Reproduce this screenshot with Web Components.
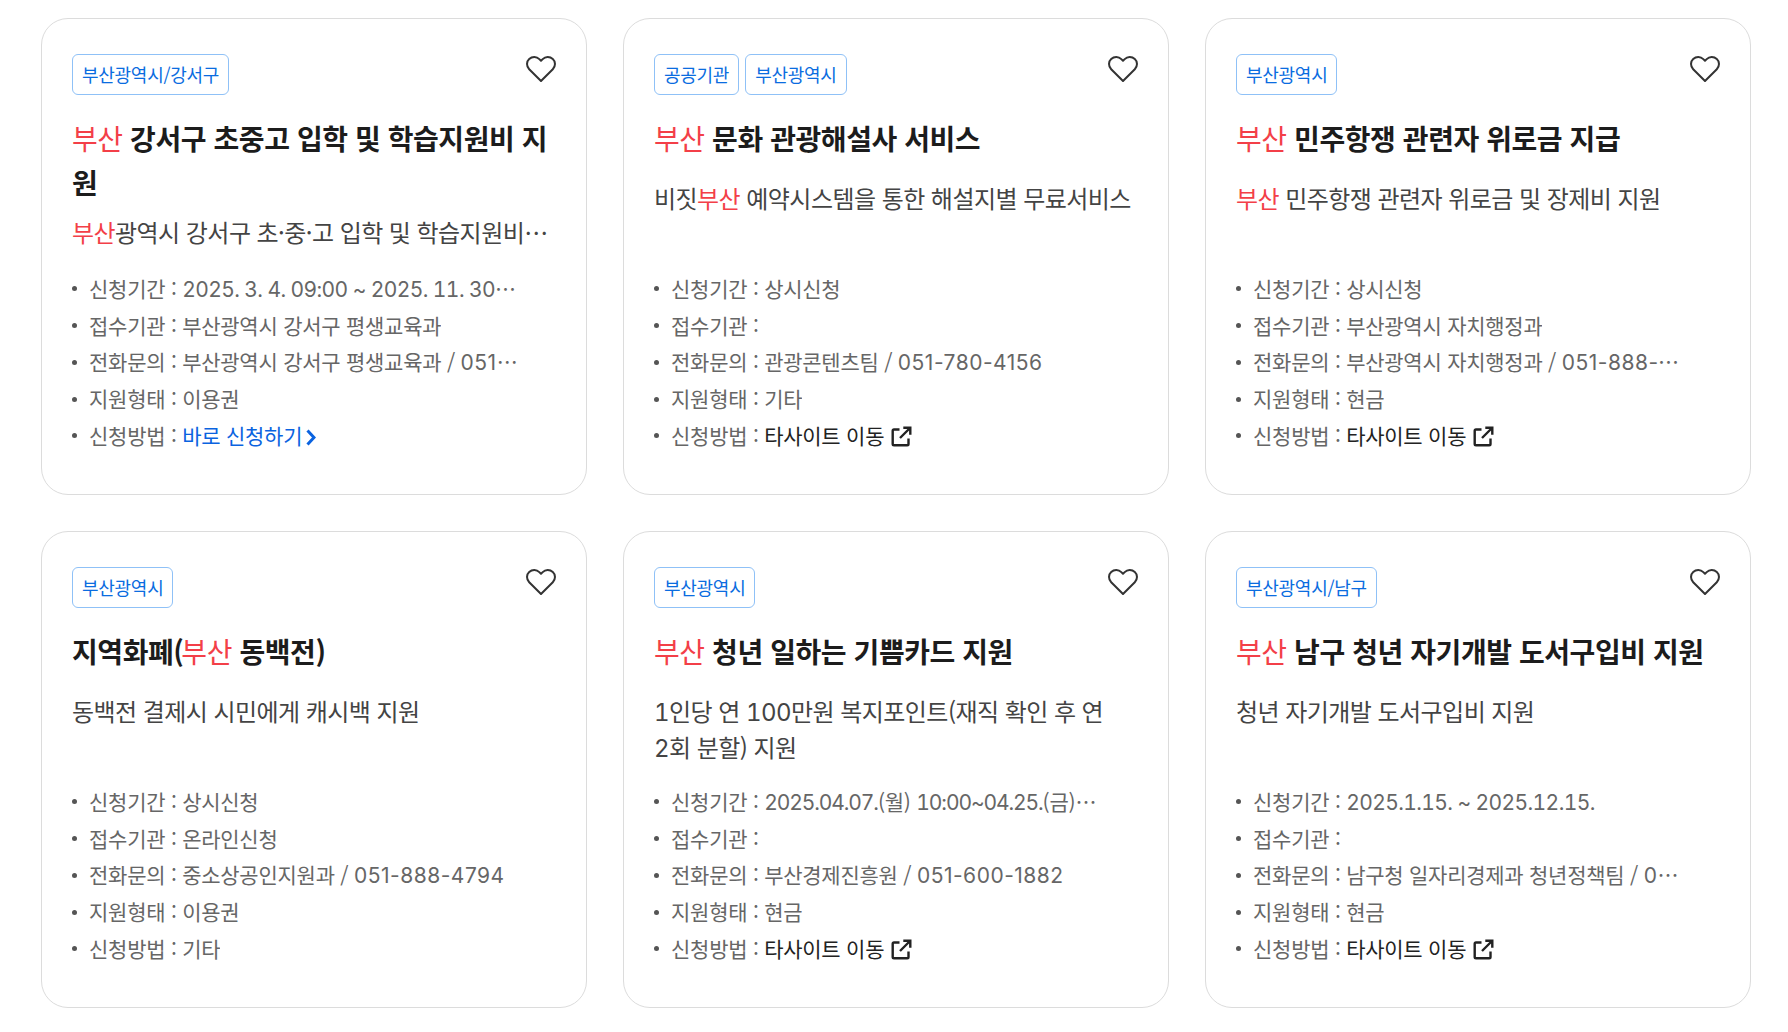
<!DOCTYPE html>
<html lang="ko"><head><meta charset="utf-8"><title>카드</title>
<style>
html,body{margin:0;padding:0;background:#fff;font-family:"Noto Sans CJK KR","Noto Sans",sans-serif}
</style></head><body>
<template id="t-grid"><style>
:host{display:grid;grid-template-columns:repeat(3,546px);column-gap:36px;row-gap:36px;padding:18px 0 0 41px}
</style><slot></slot></template>
<template id="t-card"><style>
:host{display:block;box-sizing:border-box;height:477px;border:1px solid #dcdcdc;border-radius:27px;padding:35px 30px 0 30px;background:#fff}
.top{display:flex;justify-content:space-between;align-items:flex-start;height:41px}
.tags{display:flex;gap:6px}
.title{margin-top:21px;font-size:28px;line-height:44px;font-weight:700;color:#1c1c1c;letter-spacing:-.43px}
.desc{margin-top:19.5px;height:72px;font-size:24px;line-height:36px;color:#444;letter-spacing:-.55px;overflow:hidden;word-break:keep-all}
:host([compact]) .desc{margin-top:10px;height:37.5px;white-space:nowrap;text-overflow:ellipsis}
.list{margin-top:18px;display:flex;flex-direction:column}
</style>
<div class="top"><div class="tags"><slot name="tags"></slot></div><heart-button></heart-button></div>
<div class="title"><slot name="title"></slot></div>
<div class="desc"><slot name="desc"></slot></div>
<div class="list"><slot></slot></div></template>
<template id="t-tag"><style>
:host{display:block;box-sizing:border-box;height:41px;padding:0 9px;border:1px solid #8fc1f7;border-radius:6px;font-size:18px;line-height:39px;color:#0a6ce0;letter-spacing:-.27px;white-space:nowrap}
</style><slot></slot></template>
<template id="t-heart"><style>
:host{display:block;width:30px;height:26px;margin-top:1.5px}
svg{display:block}
</style><svg width="30" height="26" viewBox="0 0 30 26" fill="none" stroke="#333" stroke-width="2" stroke-linejoin="round"><path d="M15 25 3.2 13.2C.2 10.2.4 5.4 3.2 2.9 6.2.3 10.6.4 13.3 3.1L15 4.8l1.7-1.7c2.7-2.7 7.1-2.8 10.1-.2 2.8 2.5 3 7.3 0 10.3Z"/></svg></template>
<template id="t-mark"><style>:host{display:inline;color:#f33f48;font-weight:400}</style><slot></slot></template>
<template id="t-paren"><style>:host{display:inline;letter-spacing:-2.6px}</style><slot></slot></template>
<template id="t-num"><style>:host{display:inline;font-family:Inter,"Noto Sans CJK KR",sans-serif;line-height:1;letter-spacing:.5px}
:host([tab]){font-variant-numeric:tabular-nums;letter-spacing:inherit}
:host([date]){font-variant-numeric:tabular-nums;letter-spacing:-.6px}
:host([tight]){font-variant-numeric:tabular-nums;letter-spacing:-1.1px}</style><slot></slot></template>
<template id="t-item"><style>
:host{display:flex;align-items:center;height:36.75px;font-size:21px;color:#666;letter-spacing:-.25px}
.dot{flex:none;width:5px;height:5px;border-radius:50%;background:#555;margin:2px 12px 0 0}
.txt{max-width:430px;white-space:nowrap;overflow:hidden;text-overflow:ellipsis}
</style><span class="dot"></span><span class="txt"><slot></slot></span></template>
<template id="t-link"><style>
:host{display:inline;color:#222}
svg{vertical-align:-3px;margin-left:7px}
</style><slot></slot><svg width="21" height="21" viewBox="0 0 21 21" fill="none" stroke="#222" stroke-width="2.4"><path d="M8.5 3.5H3a1.3 1.3 0 0 0-1.3 1.3V18A1.3 1.3 0 0 0 3 19.3h13.2a1.3 1.3 0 0 0 1.3-1.3V12.5"/><path d="M9 12 19 2M12.3 1.8h7v7"/></svg></template>
<template id="t-apply"><style>
:host{display:inline;color:#0a63e0}
svg{vertical-align:-2px;margin-left:4px}
</style><slot></slot><svg width="10" height="17" viewBox="0 0 10 17" fill="none" stroke="#0a63e0" stroke-width="3"><path d="M1.5 1.5 8 8.5l-6.5 7"/></svg></template>

<card-grid>
<benefit-card compact>
<tag-chip slot="tags">부산광역시/강서구</tag-chip>
<span slot="title"><red-mark>부산</red-mark> 강서구 초중고 입학 및 학습지원비 지원</span>
<span slot="desc"><red-mark>부산</red-mark>광역시 강서구 초·중·고 입학 및 학습지원비를 지원</span>
<info-item>신청기간 : <n-m date>2025. 3. 4. 09:00 ~ 2025. 11. 30. 18:00</n-m></info-item>
<info-item>접수기관 : 부산광역시 강서구 평생교육과</info-item>
<info-item>전화문의 : 부산광역시 강서구 평생교육과 / <n-m>051-970-4000</n-m></info-item>
<info-item>지원형태 : 이용권</info-item>
<info-item>신청방법 : <apply-link>바로 신청하기</apply-link></info-item>
</benefit-card>
<benefit-card>
<tag-chip slot="tags">공공기관</tag-chip><tag-chip slot="tags">부산광역시</tag-chip>
<span slot="title"><red-mark>부산</red-mark> 문화 관광해설사 서비스</span>
<span slot="desc">비짓<red-mark>부산</red-mark> 예약시스템을 통한 해설지별 무료서비스</span>
<info-item>신청기간 : 상시신청</info-item>
<info-item>접수기관 : </info-item>
<info-item>전화문의 : 관광콘텐츠팀 / <n-m>051-780-4156</n-m></info-item>
<info-item>지원형태 : 기타</info-item>
<info-item>신청방법 : <site-link>타사이트 이동</site-link></info-item>
</benefit-card>
<benefit-card>
<tag-chip slot="tags">부산광역시</tag-chip>
<span slot="title"><red-mark>부산</red-mark> 민주항쟁 관련자 위로금 지급</span>
<span slot="desc"><red-mark>부산</red-mark> 민주항쟁 관련자 위로금 및 장제비 지원</span>
<info-item>신청기간 : 상시신청</info-item>
<info-item>접수기관 : 부산광역시 자치행정과</info-item>
<info-item>전화문의 : 부산광역시 자치행정과 / <n-m>051-888-2000</n-m></info-item>
<info-item>지원형태 : 현금</info-item>
<info-item>신청방법 : <site-link>타사이트 이동</site-link></info-item>
</benefit-card>
<benefit-card>
<tag-chip slot="tags">부산광역시</tag-chip>
<span slot="title">지역화폐<tight-paren>(</tight-paren><red-mark>부산</red-mark> 동백전)</span>
<span slot="desc">동백전 결제시 시민에게 캐시백 지원</span>
<info-item>신청기간 : 상시신청</info-item>
<info-item>접수기관 : 온라인신청</info-item>
<info-item>전화문의 : 중소상공인지원과 / <n-m>051-888-4794</n-m></info-item>
<info-item>지원형태 : 이용권</info-item>
<info-item>신청방법 : 기타</info-item>
</benefit-card>
<benefit-card>
<tag-chip slot="tags">부산광역시</tag-chip>
<span slot="title"><red-mark>부산</red-mark> 청년 일하는 기쁨카드 지원</span>
<span slot="desc"><n-m tab>1</n-m>인당 연 <n-m tab>100</n-m>만원 복지포인트(재직 확인 후 연 <n-m tab>2</n-m>회 분할) 지원</span>
<info-item>신청기간 : <n-m tight>2025.04.07.</n-m>(월) <n-m tight>10:00~04.25.</n-m>(금) <n-m tight>18:00</n-m></info-item>
<info-item>접수기관 : </info-item>
<info-item>전화문의 : 부산경제진흥원 / <n-m>051-600-1882</n-m></info-item>
<info-item>지원형태 : 현금</info-item>
<info-item>신청방법 : <site-link>타사이트 이동</site-link></info-item>
</benefit-card>
<benefit-card>
<tag-chip slot="tags">부산광역시/남구</tag-chip>
<span slot="title"><red-mark>부산</red-mark> 남구 청년 자기개발 도서구입비 지원</span>
<span slot="desc">청년 자기개발 도서구입비 지원</span>
<info-item>신청기간 : <n-m date>2025.1.15. ~ 2025.12.15.</n-m></info-item>
<info-item>접수기관 : </info-item>
<info-item>전화문의 : 남구청 일자리경제과 청년정책팀 / <n-m>051-607-4000</n-m></info-item>
<info-item>지원형태 : 현금</info-item>
<info-item>신청방법 : <site-link>타사이트 이동</site-link></info-item>
</benefit-card>
</card-grid>
<script>
const defs={'card-grid':'t-grid','benefit-card':'t-card','tag-chip':'t-tag','heart-button':'t-heart','red-mark':'t-mark','tight-paren':'t-paren','n-m':'t-num','info-item':'t-item','site-link':'t-link','apply-link':'t-apply'};
for(const [name,id] of Object.entries(defs)){
  customElements.define(name,class extends HTMLElement{
    constructor(){super();this.attachShadow({mode:'open'}).appendChild(document.getElementById(id).content.cloneNode(true));}
  });
}
</script>
</body></html>
